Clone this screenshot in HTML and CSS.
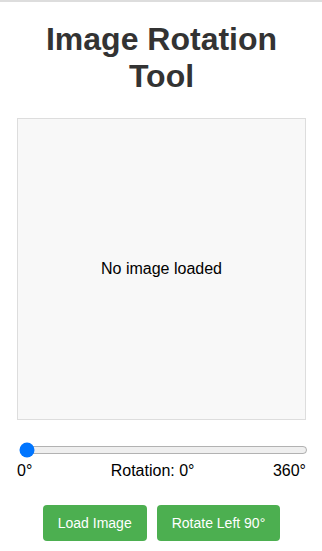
FILE: index.html
```html
<!DOCTYPE html>
<html lang="en">

<head>
  <meta charset="UTF-8">
  <meta name="viewport" content="width=device-width, initial-scale=1.0">
  <title>Image Rotation Tool</title>
  <link rel="stylesheet" href="styles.css">
</head>

<body>
  <div class="container">
    <h1>Image Rotation Tool</h1>

    <div class="image-box">
      <span class="placeholder">No image loaded</span>
    </div>

    <div class="slider-wrap">
      <input type="range" id="rotation" min="0" max="360" value="0">
      <div class="slider-labels">
        <span>0°</span>
        <span>Rotation: <span id="angle">0</span>°</span>
        <span>360°</span>
      </div>
    </div>

    <div class="buttons">
      <button class="btn">Load Image</button>
      <button class="btn">Rotate Left 90°</button>
    </div>
  </div>
</body>

</html>
```

FILE: styles.css
```css
body {
  margin: 0;
  font-family: "Liberation Sans", Arial, sans-serif;
  color: #000;
  background: #fff;
}

.container {
  border-top: 2px solid #dddddd;
  padding: 0 16px 20px 17px;
}

h1 {
  margin: 19px 0 23px;
  font-size: 32px;
  text-align: center;
  color: #333;
}

.image-box {
  display: flex;
  align-items: center;
  justify-content: center;
  height: 300px;
  border: 1px solid #dddddd;
  background-color: #f8f8f8;
  font-size: 16px;
}

.slider-wrap {
  margin-top: 22px;
}

#rotation {
  display: block;
  width: 100%;
  margin: 2px;
}

.slider-labels {
  display: flex;
  justify-content: space-between;
  font-size: 16px;
  margin-top: 4px;
}

.buttons {
  display: flex;
  justify-content: center;
  gap: 10px;
  margin-top: 25px;
}

.btn {
  padding: 10px 15px;
  border: none;
  border-radius: 4px;
  background-color: #4caf50;
  color: #fff;
  font-family: "Liberation Sans", Arial, sans-serif;
  font-size: 14px;
  cursor: pointer;
}
```
